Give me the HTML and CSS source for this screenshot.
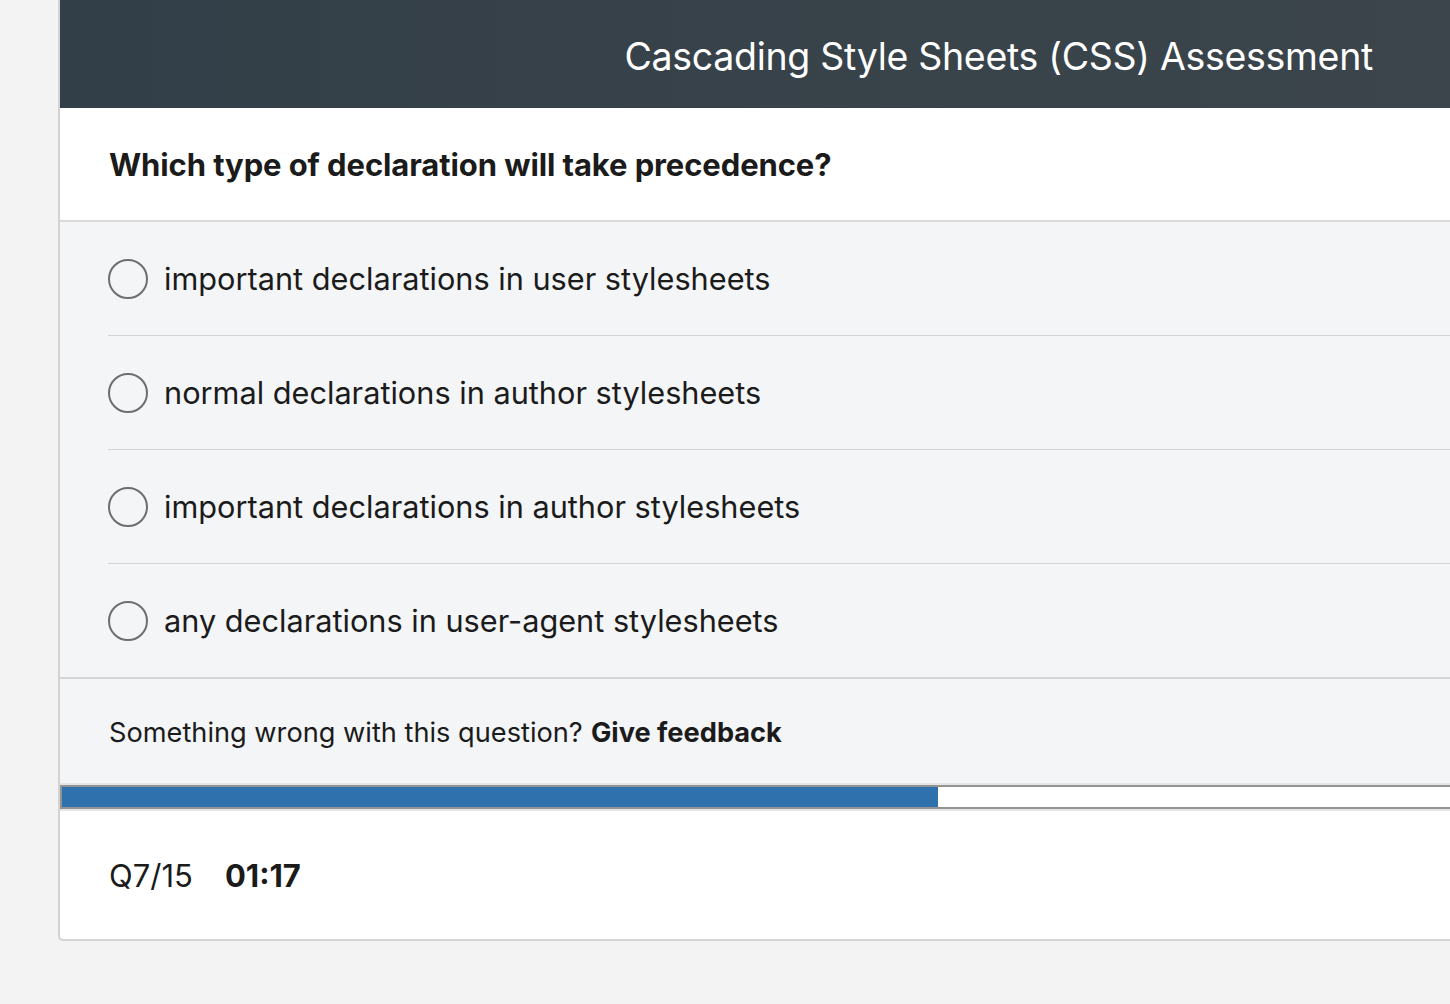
FILE: index.html
```html
<!DOCTYPE html>
<html>

<head>
    <meta charset="utf-8">
    <title>CSS Assessment</title>
    <link rel="stylesheet" href="styles.css">
</head>

<body>
    <div class="card">
        <div class="header">
            <h1>Cascading Style Sheets (CSS) Assessment</h1>
        </div>
        <div class="question">
            <h2>Which type of declaration will take precedence?</h2>
        </div>
        <ul class="options">
            <li class="option"><span class="radio"></span><span>important declarations in user stylesheets</span></li>
            <li class="option"><span class="radio"></span><span>normal declarations in author stylesheets</span></li>
            <li class="option"><span class="radio"></span><span>important declarations in author stylesheets</span></li>
            <li class="option"><span class="radio"></span><span>any declarations in user-agent stylesheets</span></li>
        </ul>
        <div class="feedback">
            Something wrong with this question? <b>Give feedback</b>
        </div>
        <div class="progress">
            <div class="progress-fill" style="width: 876px"></div>
        </div>
        <div class="footer">
            <span class="count">Q7/15</span>
            <span class="timer">01:17</span>
        </div>
    </div>
</body>

</html>
```

FILE: styles.css
```css
html, body {
  margin: 0;
  overflow: hidden;
}

body {
  background: #f3f3f3;
  font-family: Inter, "Helvetica Neue", sans-serif;
  color: #1b1b1b;
  height: 1004px;
}

.card {
  /* The card runs past the right edge of the window */
  margin-left: 58px;
  width: 1400px;
  background: #fff;
  border-left: 2px solid #d3d3d3;
  border-bottom: 2px solid #d3d3d3;
  border-bottom-left-radius: 5px;
}

.header {
  height: 108px;
  box-sizing: border-box;
  padding-top: 5px;
  background: linear-gradient(to right, #333f48, #3b454b);
  display: flex;
  align-items: center;
  justify-content: flex-end;
  padding-right: 87px;
}

h1 {
  margin: 0;
  color: #fff;
  font-weight: 400;
  font-size: 37.5px;
  letter-spacing: -0.3px;
}

.question {
  height: 112px;
  display: flex;
  align-items: center;
  padding-left: 49px;
  border-bottom: 2px solid #dadada;
}

h2 {
  margin: 0;
  font-size: 31px;
  font-weight: 700;
  letter-spacing: -0.1px;
}

.options {
  list-style: none;
  margin: 0;
  padding: 0 0 0 48px;
  background: #f4f5f7;
}

.option {
  height: 113px;
  display: flex;
  align-items: center;
  gap: 16px;
  font-size: 30.7px;
  border-bottom: 1px solid #d3d3d3;
}

.option:last-child {
  border-bottom: none;
}

.radio {
  width: 36px;
  height: 36px;
  border: 2px solid #6e6e6e;
  border-radius: 50%;
  flex-shrink: 0;
}

.feedback {
  height: 108px;
  box-sizing: border-box;
  display: flex;
  align-items: center;
  gap: 0.3em;
  padding-left: 49px;
  font-size: 27.2px;
  background: #f4f5f7;
  border-top: 2px solid #d6d6d6;
}

.progress {
  height: 20px;
  background: #fff;
  border: 2px solid #939393;
  border-right: none;
  box-shadow: 0 2px 0 #e6e6e6, 0 -2px 0 #e6e6e6;
}

.progress-fill {
  height: 100%;
  background: #2e71ad;
}

.footer {
  height: 130px;
  display: flex;
  align-items: center;
  gap: 32px;
  padding-left: 49px;
  padding-top: 2px;
  box-sizing: border-box;
  font-size: 31px;
}

.timer {
  font-weight: 700;
}
```
